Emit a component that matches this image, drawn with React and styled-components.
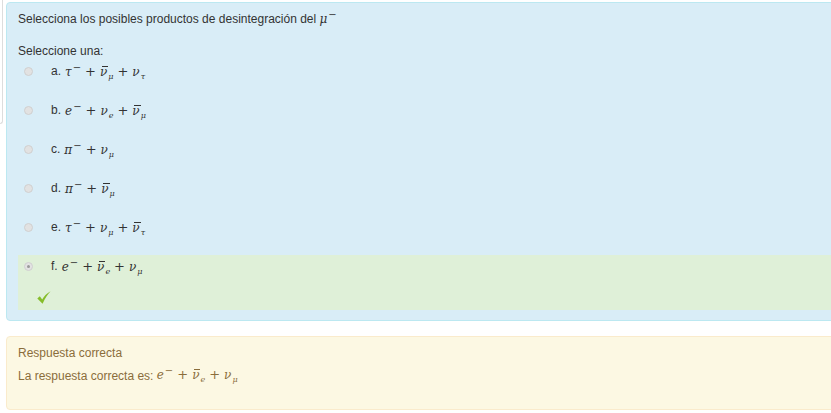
import { createGlobalStyle, styled } from "styled-components";

const Global = createGlobalStyle`
  body {
    margin: 0;
    background: #fff;
    font-family: "Liberation Sans", Arial, sans-serif;
    font-size: 12px;
    color: #333;
    overflow: hidden;
  }
`;

const Page = styled.div`
  display: flex;
  align-items: flex-start;
  width: 845px;
`;

const SideStub = styled.div`
  flex: 0 0 2px;
  height: 123px;
  border-right: 1px solid #ddd;
  border-bottom: 1px solid #ddd;
  border-bottom-right-radius: 4px;
`;

const Main = styled.div`
  flex: 1;
  margin-left: 3px;
  padding-top: 2px;
`;

const Panel = styled.div`
  background: ${(p) => (p.$tone === "warn" ? "#fcf8e3" : "#d9edf7")};
  border: 1px solid ${(p) => (p.$tone === "warn" ? "#faebcc" : "#bce8f1")};
  border-radius: 4px;
  padding: ${(p) => (p.$tone === "warn" ? "7px 11px 24px" : "7px 12px 10px 11px")};
  color: ${(p) => (p.$tone === "warn" ? "#8a6d3b" : "#333")};
  margin-bottom: 15px;
`;

const Line = styled.div`
  line-height: 18px;
  height: 18px;
  white-space: nowrap;
  display: flex;
  align-items: center;
  margin-top: ${(p) => p.$gap || 0}px;
`;

const Options = styled.div`
  display: flex;
  flex-direction: column;
`;

const Option = styled.div`
  box-sizing: border-box;
  height: ${(p) => (p.$correct ? "55px" : "39px")};
  padding-top: 2px;
  background: ${(p) => (p.$correct ? "#dff0d8" : "transparent")};
`;

const OptionRow = styled.div`
  display: flex;
  align-items: center;
  height: 18px;
  padding-left: 6px;
`;

const Radio = styled.span`
  width: 9px;
  height: 9px;
  border-radius: 50%;
  background: #e2e2e2;
  border: 1px solid #d0d0d0;
  box-sizing: border-box;
  margin-right: 18px;
  display: flex;
  align-items: center;
  justify-content: center;
  &::after {
    content: "";
    width: 3px;
    height: 3px;
    border-radius: 50%;
    background: ${(p) => (p.$checked ? "#999" : "transparent")};
  }
`;

const Letter = styled.span`
  margin-right: 4px;
`;

const Feedback = styled.div`
  padding: 16px 0 0 19px;
  height: 14px;
  line-height: 0;
`;

const Math = styled.span`
  font-family: "DejaVu Serif", "Liberation Serif", serif;
  font-style: italic;
  font-size: 12px;
  white-space: nowrap;
  display: inline-flex;
  align-items: baseline;
`;

const Plus = styled.span`
  font-family: "DejaVu Serif", serif;
  font-style: normal;
  font-size: 13px;
  margin: 0 4px;
`;

const Sup = styled.span`
  font-style: normal;
  font-size: 10px;
  position: relative;
  top: -5px;
  margin-left: 1px;
`;

const Sub = styled.span`
  font-size: 8px;
  position: relative;
  top: 3px;
  margin-left: 1px;
`;

const Barred = styled.span`
  position: relative;
  &::before {
    content: "";
    position: absolute;
    left: 2px;
    right: -1px;
    top: 1px;
    border-top: 1px solid currentColor;
  }
`;

const Sym = ({ s, sub, bar, minus }) => (
  <span>
    {bar ? <Barred>{s}</Barred> : s}
    {minus && <Sup>−</Sup>}
    {sub && <Sub>{sub}</Sub>}
  </span>
);

const Expr = ({ terms }) => (
  <Math>
    {terms.map((t, i) => (
      <span key={i}>
        {i > 0 && <Plus>+</Plus>}
        <Sym {...t} />
      </span>
    ))}
  </Math>
);

const Check = () => (
  <svg width="14" height="13" viewBox="0 0 14 13">
    <path
      d="M0.3 7.4 L2.8 5.3 L5.2 8.6 C7.2 5 9.8 2.2 13.6 0.2 C10.6 3.2 8.2 6.8 5.6 12.8 Z"
      fill="#86bd2b"
    />
  </svg>
);

const options = [
  { l: "a.", t: [{ s: "τ", minus: true }, { s: "ν", bar: true, sub: "μ" }, { s: "ν", sub: "τ" }] },
  { l: "b.", t: [{ s: "e", minus: true }, { s: "ν", sub: "e" }, { s: "ν", bar: true, sub: "μ" }] },
  { l: "c.", t: [{ s: "π", minus: true }, { s: "ν", sub: "μ" }] },
  { l: "d.", t: [{ s: "π", minus: true }, { s: "ν", bar: true, sub: "μ" }] },
  { l: "e.", t: [{ s: "τ", minus: true }, { s: "ν", sub: "μ" }, { s: "ν", bar: true, sub: "τ" }] },
  { l: "f.", t: [{ s: "e", minus: true }, { s: "ν", bar: true, sub: "e" }, { s: "ν", sub: "μ" }], correct: true },
];

const App = () => (
  <Page>
    <Global />
    <SideStub />
    <Main>
      <Panel>
        <Line>
          Selecciona los posibles productos de desintegración del&nbsp;
          <Expr terms={[{ s: "μ", minus: true }]} />
        </Line>
        <Line $gap={14}>Seleccione una:</Line>
        <Options>
          {options.map((o) => (
            <Option key={o.l} $correct={o.correct}>
              <OptionRow>
                <Radio $checked={o.correct} />
                <Letter>{o.l}</Letter>
                <Expr terms={o.t} />
              </OptionRow>
              {o.correct && (
                <Feedback>
                  <Check />
                </Feedback>
              )}
            </Option>
          ))}
        </Options>
      </Panel>
      <Panel $tone="warn">
        <Line>Respuesta correcta</Line>
        <Line $gap={5}>
          La respuesta correcta es:&nbsp;
          <Expr terms={[{ s: "e", minus: true }, { s: "ν", bar: true, sub: "e" }, { s: "ν", sub: "μ" }]} />
        </Line>
      </Panel>
    </Main>
  </Page>
);

export default App;
